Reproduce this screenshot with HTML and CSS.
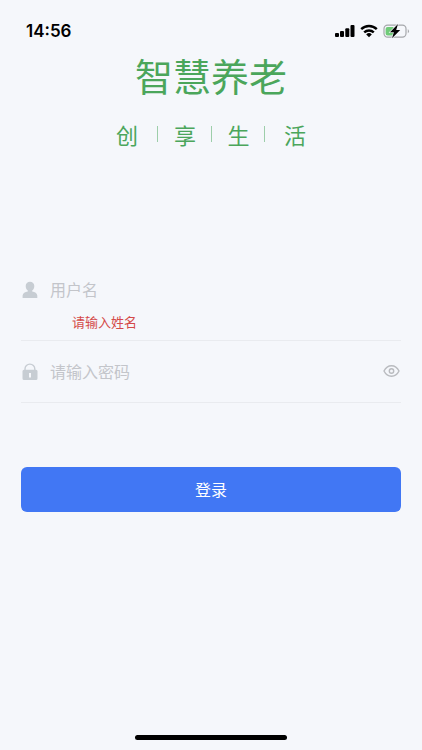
FILE: index.html
```html
<!DOCTYPE html>
<html lang="zh-CN">
<head>
<meta charset="utf-8">
<meta name="viewport" content="width=device-width, initial-scale=1">
<title>智慧养老</title>
<link rel="stylesheet" href="styles.css">
</head>
<body>
<div class="screen">
  <div class="status">
    <time class="clock">14:56</time>
    <div class="indicators">
      <svg width="20" height="14" viewBox="0 0 20 14" aria-hidden="true">
        <rect x="0" y="9" width="4" height="4" rx="1"/>
        <rect x="5" y="7" width="4" height="6" rx="1"/>
        <rect x="10.3" y="4.2" width="4" height="8.800" rx="1"/>
        <rect x="15.500" y="1" width="4" height="12" rx="1"/>
      </svg>
      <svg width="18" height="14" viewBox="0 0 18 14" aria-hidden="true">
        <g fill="none" stroke="#000" stroke-width="2.4">
          <path d="M1.2 5.2A11.2 11.2 0 0 1 16.8 5.2"/>
          <path d="M4.2 8.4A7 7 0 0 1 13.8 8.4"/>
        </g>
        <path d="M9 13.2L6.2 10.4A4 4 0 0 1 11.8 10.4Z"/>
      </svg>
      <svg width="27" height="16" viewBox="0 0 27 16" aria-hidden="true">
        <rect x="1" y="2.2" width="22" height="12" rx="3.6" fill="none" stroke="#a5a7ab" stroke-width="1.2"/>
        <path d="M24.800 6A2.600 2.600 0 0 1 24.800 10.300Z" fill="#a5a7ab"/>
        <path d="M4.600 4H10.500V12.500H4.600A2 2 0 0 1 2.600 10.500V6A2 2 0 0 1 4.600 4Z" fill="#70cb79"/>
        <path d="M15 1L7 9.200H10.900L9 15.200L17.200 7H13.200Z" stroke="#f5f7fb" stroke-width="1.2" paint-order="stroke"/>
      </svg>
    </div>
  </div>

  <header class="brand">
    <h1 class="title">智慧养老</h1>
    <div class="slogan"><span>创</span><span>享</span><span>生</span><span>活</span></div>
  </header>

  <form class="login" novalidate>
    <div class="field">
      <div class="row">
        <svg class="icon" width="18" height="18" viewBox="0 0 18 18" aria-hidden="true">
          <path d="M9 .7C6.500 .7 4.700 2.500 4.700 5C4.700 7 5.500 8.600 6.800 9.500V10.600C4 11.200 1.800 12.300 1.600 14.600V17H16.300V14.600C16.100 12.300 14 11.200 11.200 10.600V9.500C12.500 8.600 13.300 7 13.300 5C13.300 2.500 11.500 .7 9 .7Z"/>
        </svg>
        <input class="input" type="text" placeholder="用户名" aria-label="用户名" aria-describedby="name-error">
      </div>
      <p class="error" id="name-error">请输入姓名</p>
    </div>
    <div class="field">
      <div class="row">
        <svg class="icon" width="18" height="18" viewBox="0 0 18 18" aria-hidden="true">
          <path d="M4 8V6A4.900 4.900 0 0 1 13.800 6V8" fill="none" stroke="#c7cdd3" stroke-width="1.400"/>
          <path fill-rule="evenodd" d="M3 6.800H15Q16.500 6.800 16.500 8.300V15.500Q16.500 17 15 17H3Q1.500 17 1.500 15.500V8.300Q1.500 6.800 3 6.800ZM8 10V14.500H10V10Z"/>
        </svg>
        <input class="input" type="password" placeholder="请输入密码" aria-label="密码">
        <button class="reveal" type="button" aria-label="显示密码">
          <svg width="18" height="14" viewBox="0 0 18 14" fill="none" stroke="#b9bbbf" stroke-width="1.400" aria-hidden="true">
            <path d="M1 7C2.700 3.600 5.400 1.800 8.500 1.800S14.300 3.600 16 7C14.300 10.400 11.600 12.200 8.500 12.200S2.700 10.400 1 7Z"/>
            <circle cx="8.500" cy="7" r="2.200"/>
          </svg>
        </button>
      </div>
    </div>
    <button class="submit" type="submit">登录</button>
  </form>

  <div class="home-bar"></div>
</div>
</body>
</html>
```
FILE: styles.css
```css
* {
  box-sizing: border-box;
}

body {
  margin: 0;
  background: #f5f7fb;
  color: #000;
  font-family: "Noto Sans CJK SC", sans-serif;
}

.screen {
  display: flex;
  flex-direction: column;
  min-height: 100vh;
}

.status {
  display: flex;
  align-items: center;
  justify-content: space-between;
  padding: 20px 12px 0 26px;
}

.clock {
  font: 600 17px/22px Inter, sans-serif;
}

.indicators {
  display: flex;
  align-items: center;
  gap: 5px;
}

.brand {
  display: flex;
  flex-direction: column;
  align-items: center;
  gap: 20px;
  padding-top: 7px;
  color: #4ba65b;
}

.title {
  margin: 0;
  font-size: 38px;
  font-weight: 400;
  line-height: 52px;
}

.slogan {
  display: grid;
  grid-template-columns: 42px 54px 53px 41px;
  font-size: 22px;
  line-height: 26px;
  text-align: center;
}

.slogan span {
  background: linear-gradient(#9dceaa, #9dceaa) right center / 1px 16px no-repeat;
}

.slogan span:first-child {
  text-align: left;
}

.slogan span:last-child {
  background: none;
  text-align: right;
}

.login {
  display: flex;
  flex-direction: column;
  padding: 130px 21px 0;
}

.field {
  padding-bottom: 8px;
  border-bottom: 1px solid #e9ebef;
}

.field + .field {
  padding: 18px 0;
}

.row {
  display: flex;
  align-items: center;
  height: 25px;
}

.icon {
  flex: none;
  margin-right: 11px;
  fill: #c7cdd3;
}

.input {
  flex: 1;
  min-width: 0;
  height: 24px;
  padding: 0 0 2px;
  border: 0;
  outline: 0;
  background: transparent;
  color: #333;
  font: 16px/22px "Noto Sans CJK SC", sans-serif;
}

.input::placeholder {
  color: #c3c5ca;
  opacity: 1;
}

.error {
  margin: 10px 0 0 51px;
  color: #d44a49;
  font-size: 13px;
  line-height: 20px;
}

.reveal {
  display: flex;
  padding: 0 0 2px;
  border: 0;
  background: none;
}

.submit {
  height: 45px;
  margin-top: 64px;
  padding: 0 0 2px;
  border: 0;
  border-radius: 6px;
  background: #4177f4;
  color: #fff;
  font: 16px/24px "Noto Sans CJK SC", sans-serif;
}

.home-bar {
  width: 36%;
  height: 5px;
  margin: auto auto 10px;
  border-radius: 3px;
  background: #000;
}
```
